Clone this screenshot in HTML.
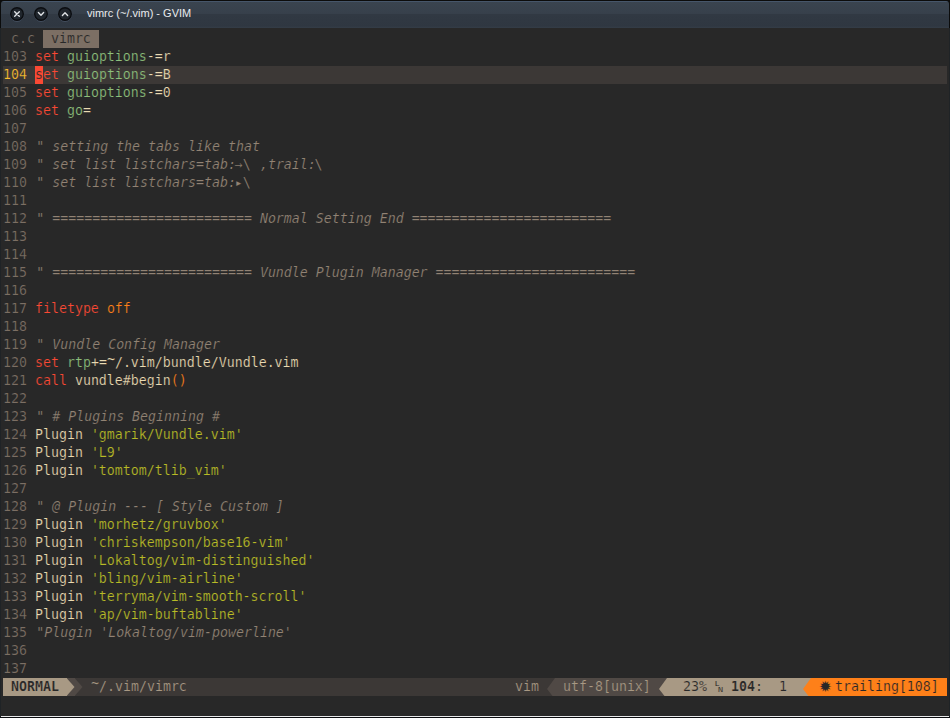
<!DOCTYPE html>
<html lang="en">
<head>
<meta charset="utf-8">
<title>vimrc (~/.vim) - GVIM</title>
<style>
html,body{margin:0;padding:0}
body{width:950px;height:718px;overflow:hidden;background:#282828;position:relative;font-family:"Liberation Sans",sans-serif}
#frame{position:absolute;left:0;top:0;width:950px;height:718px;background:linear-gradient(#0b0c0c 0,#0b0c0c 28px,#1f2326 28px,#1f2326 100%)}
#top{position:absolute;left:0;top:0;width:950px;height:1px;background:#0c0c0b}
#tb{position:absolute;left:1px;top:1px;width:948px;height:27px;border-radius:3px 3px 0 0;
 background:linear-gradient(#46566a 0,#46566a 1px,#3a444f 1px,#37404b 13px,#313943 13px,#2f3741 25px,#343d47 27px)}
#btns{position:absolute;left:0;top:0}
#title{position:absolute;left:86px;top:-1px;height:27px;line-height:27px;font-size:11px;color:#e9ebee;white-space:pre}
#ed{position:absolute;left:1px;top:28px;width:948px;height:687px;background:#282828}
#bl{position:absolute;left:1px;top:715px;width:948px;height:1px;background:#282828}
#wl{position:absolute;left:1px;top:716px;width:948px;height:1px;background:#e8e9ea}
#dl{position:absolute;left:0;top:717px;width:950px;height:1px;background:#0a0c10}
#grid{position:absolute;left:2px;top:2px;width:944px;font-family:"DejaVu Sans Mono","Liberation Mono",monospace;font-size:13.288px;line-height:18px;color:#ebdbb2}
#grid div{height:18px;overflow:hidden;white-space:pre;-webkit-text-stroke:.2px #282828}
#grid div.cl{-webkit-text-stroke-color:#3c3836}
#grid div#st{-webkit-text-stroke-color:#3c3836}
.n{color:#7c6f64}
.cl{background:#3c3836}
.cl .n{color:#fabd2f}
.r{color:#fb4934}
.a{color:#8ec07c}
.g{color:#b8bb26}
.o{color:#fe8019}
.c{color:#928374;font-style:italic;position:relative;left:1.3px}
.u{font-style:normal;left:0}
.t{position:relative;top:-3px;font-style:normal}
.cur{-webkit-text-stroke-color:#fb4934;display:inline-block;height:18px;vertical-align:top;background:#fb4934;color:#282828}
#tabs{color:#7c6f64}
#tabs .sel{-webkit-text-stroke-color:#7c6f64;display:inline-block;height:18px;vertical-align:top;background:#7c6f64;color:#282828}
#st{position:relative;background:#3c3836;color:#a89984}
#st span{display:inline-block;height:18px;vertical-align:top}
.s1{background:#a89984;color:#282828;font-weight:bold;-webkit-text-stroke-color:#a89984}
.s2{background:#504945;color:#a89984;-webkit-text-stroke-color:#504945}
.s3{background:#a89984;color:#282828;-webkit-text-stroke-color:#a89984}
.s4{background:#fe8019;color:#282828;-webkit-text-stroke-color:#fe8019}
.ar{width:8px;position:relative}
.ar svg{position:absolute;left:0;top:0;width:8px;height:18px}
b{font-weight:bold}
.lnn{position:relative;font-size:7px;line-height:7px;font-weight:bold;font-family:"Liberation Sans",sans-serif}
.lnn i{position:absolute;font-style:normal}
.l1{left:0;top:2px}
.l2{left:3px;top:8px}
.star{position:relative;overflow:visible}
.star i{position:absolute;left:0;top:-3px;font-style:normal;font-size:21px;line-height:21px}
</style>
</head>
<body>
<div id="frame"></div>
<div id="top"></div>
<div id="tb">
 <svg id="btns" width="80" height="27" viewBox="0 0 80 27">
  <g fill="none" stroke="#55657a" stroke-opacity=".55" stroke-width="1"><circle cx="16" cy="13.8" r="6.6"/><circle cx="40" cy="13.8" r="6.6"/><circle cx="64" cy="13.8" r="6.6"/></g>
  <g fill="#20262d" stroke="#0b0d10" stroke-width="1.4"><circle cx="16" cy="13" r="6.3"/><circle cx="40" cy="13" r="6.3"/><circle cx="64" cy="13" r="6.3"/></g>
  <g fill="none" stroke="#dfe2e5" stroke-width="1.4" stroke-linecap="round" stroke-linejoin="round">
   <path d="M13.7 10.7l4.6 4.6M18.3 10.7l-4.6 4.6"/>
   <path d="M37.4 11.6l2.6 2.6l2.6-2.6"/>
   <path d="M61.4 14.4l2.6-2.6l2.6 2.6"/>
  </g>
 </svg>
 <div id="title">vimrc (~/.vim) - GVIM</div>
</div>
<div id="ed">
<div id="grid">
<div id="tabs"> c.c <span class="sel"> vimrc </span></div>
<div class="ln"><span class="n">103</span> <span class="r">set</span> <span class="a">guioptions</span>-=r</div>
<div class="ln cl"><span class="n">104</span> <span class="cur">s</span><span class="r">et</span> <span class="a">guioptions</span>-=B</div>
<div class="ln"><span class="n">105</span> <span class="r">set</span> <span class="a">guioptions</span>-=0</div>
<div class="ln"><span class="n">106</span> <span class="r">set</span> <span class="a">go</span>=</div>
<div class="ln"><span class="n">107</span> </div>
<div class="ln"><span class="n">108</span> <span class="c">" setting the tabs like that</span></div>
<div class="ln"><span class="n">109</span> <span class="c">" set list listchars=tab:</span><span class="c u">→\</span><span class="c"> ,trail:</span><span class="c u">\</span></div>
<div class="ln"><span class="n">110</span> <span class="c">" set list listchars=tab:</span><span class="c u">▸\</span></div>
<div class="ln"><span class="n">111</span> </div>
<div class="ln"><span class="n">112</span> <span class="c">" ========================= Normal Setting End =========================</span></div>
<div class="ln"><span class="n">113</span> </div>
<div class="ln"><span class="n">114</span> </div>
<div class="ln"><span class="n">115</span> <span class="c">" ========================= Vundle Plugin Manager =========================</span></div>
<div class="ln"><span class="n">116</span> </div>
<div class="ln"><span class="n">117</span> <span class="r">filetype</span> <span class="o">off</span></div>
<div class="ln"><span class="n">118</span> </div>
<div class="ln"><span class="n">119</span> <span class="c">" Vundle Config Manager</span></div>
<div class="ln"><span class="n">120</span> <span class="r">set</span> <span class="a">rtp</span>+=<span class="t">~</span>/.vim/bundle/Vundle.vim</div>
<div class="ln"><span class="n">121</span> <span class="r">call</span> vundle#begin<span class="o">()</span></div>
<div class="ln"><span class="n">122</span> </div>
<div class="ln"><span class="n">123</span> <span class="c">" # Plugins Beginning #</span></div>
<div class="ln"><span class="n">124</span> Plugin <span class="g">'gmarik/Vundle.vim'</span></div>
<div class="ln"><span class="n">125</span> Plugin <span class="g">'L9'</span></div>
<div class="ln"><span class="n">126</span> Plugin <span class="g">'tomtom/tlib_vim'</span></div>
<div class="ln"><span class="n">127</span> </div>
<div class="ln"><span class="n">128</span> <span class="c">" @ Plugin --- [ Style Custom ]</span></div>
<div class="ln"><span class="n">129</span> Plugin <span class="g">'morhetz/gruvbox'</span></div>
<div class="ln"><span class="n">130</span> Plugin <span class="g">'chriskempson/base16-vim'</span></div>
<div class="ln"><span class="n">131</span> Plugin <span class="g">'Lokaltog/vim-distinguished'</span></div>
<div class="ln"><span class="n">132</span> Plugin <span class="g">'bling/vim-airline'</span></div>
<div class="ln"><span class="n">133</span> Plugin <span class="g">'terryma/vim-smooth-scroll'</span></div>
<div class="ln"><span class="n">134</span> Plugin <span class="g">'ap/vim-buftabline'</span></div>
<div class="ln"><span class="n">135</span> <span class="c">"Plugin 'Lokaltog/vim-powerline'</span></div>
<div class="ln"><span class="n">136</span> </div>
<div class="ln"><span class="n">137</span> </div>
<div id="st"><span class="s1" style="width:64px"> NORMAL </span><span class="ar s2" style="width:8px"><svg viewBox="0 0 8 18"><path d="M0 0.4L7.5 9L0 17.6z" fill="#a89984"/></svg></span><span class="ar" style="width:8px"><svg viewBox="0 0 8 18"><path d="M0 0.4L7.5 9L0 17.6z" fill="#504945"/></svg></span><span class="" style="width:432px"> <i class="t">~</i>/.vim/vimrc</span><span class="" style="width:32px">vim </span><span class="ar" style="width:8px"><svg viewBox="0 0 8 18"><path d="M8 0L0 10.9L5.5 18L8 18z" fill="#504945"/></svg></span><span class="s2" style="width:104px"> utf-8[unix] </span><span class="ar s2" style="width:8px"><svg viewBox="0 0 8 18"><path d="M8 0L0 10.9L5.5 18L8 18z" fill="#a89984"/></svg></span><span class="s3" style="width:48px">  23% </span><span class="s3 lnn" style="width:8px"><i class="l1">L</i><i class="l2">N</i></span><span class="s3" style="width:80px"> <b>104</b>:  1  </span><span class="ar s3" style="width:8px"><svg viewBox="0 0 8 18"><path d="M8 0L0 10.9L5.5 18L8 18z" fill="#fe8019"/></svg></span><span class="s4" style="width:8px"> </span><span class="s4 star" style="width:8px"><i>&#x2739;</i></span><span class="s4" style="width:120px"> trailing[108] </span></div>
<div> </div>
</div>
</div>
<div id="bl"></div>
<div id="wl"></div>
<div id="dl"></div>
</body>
</html>
